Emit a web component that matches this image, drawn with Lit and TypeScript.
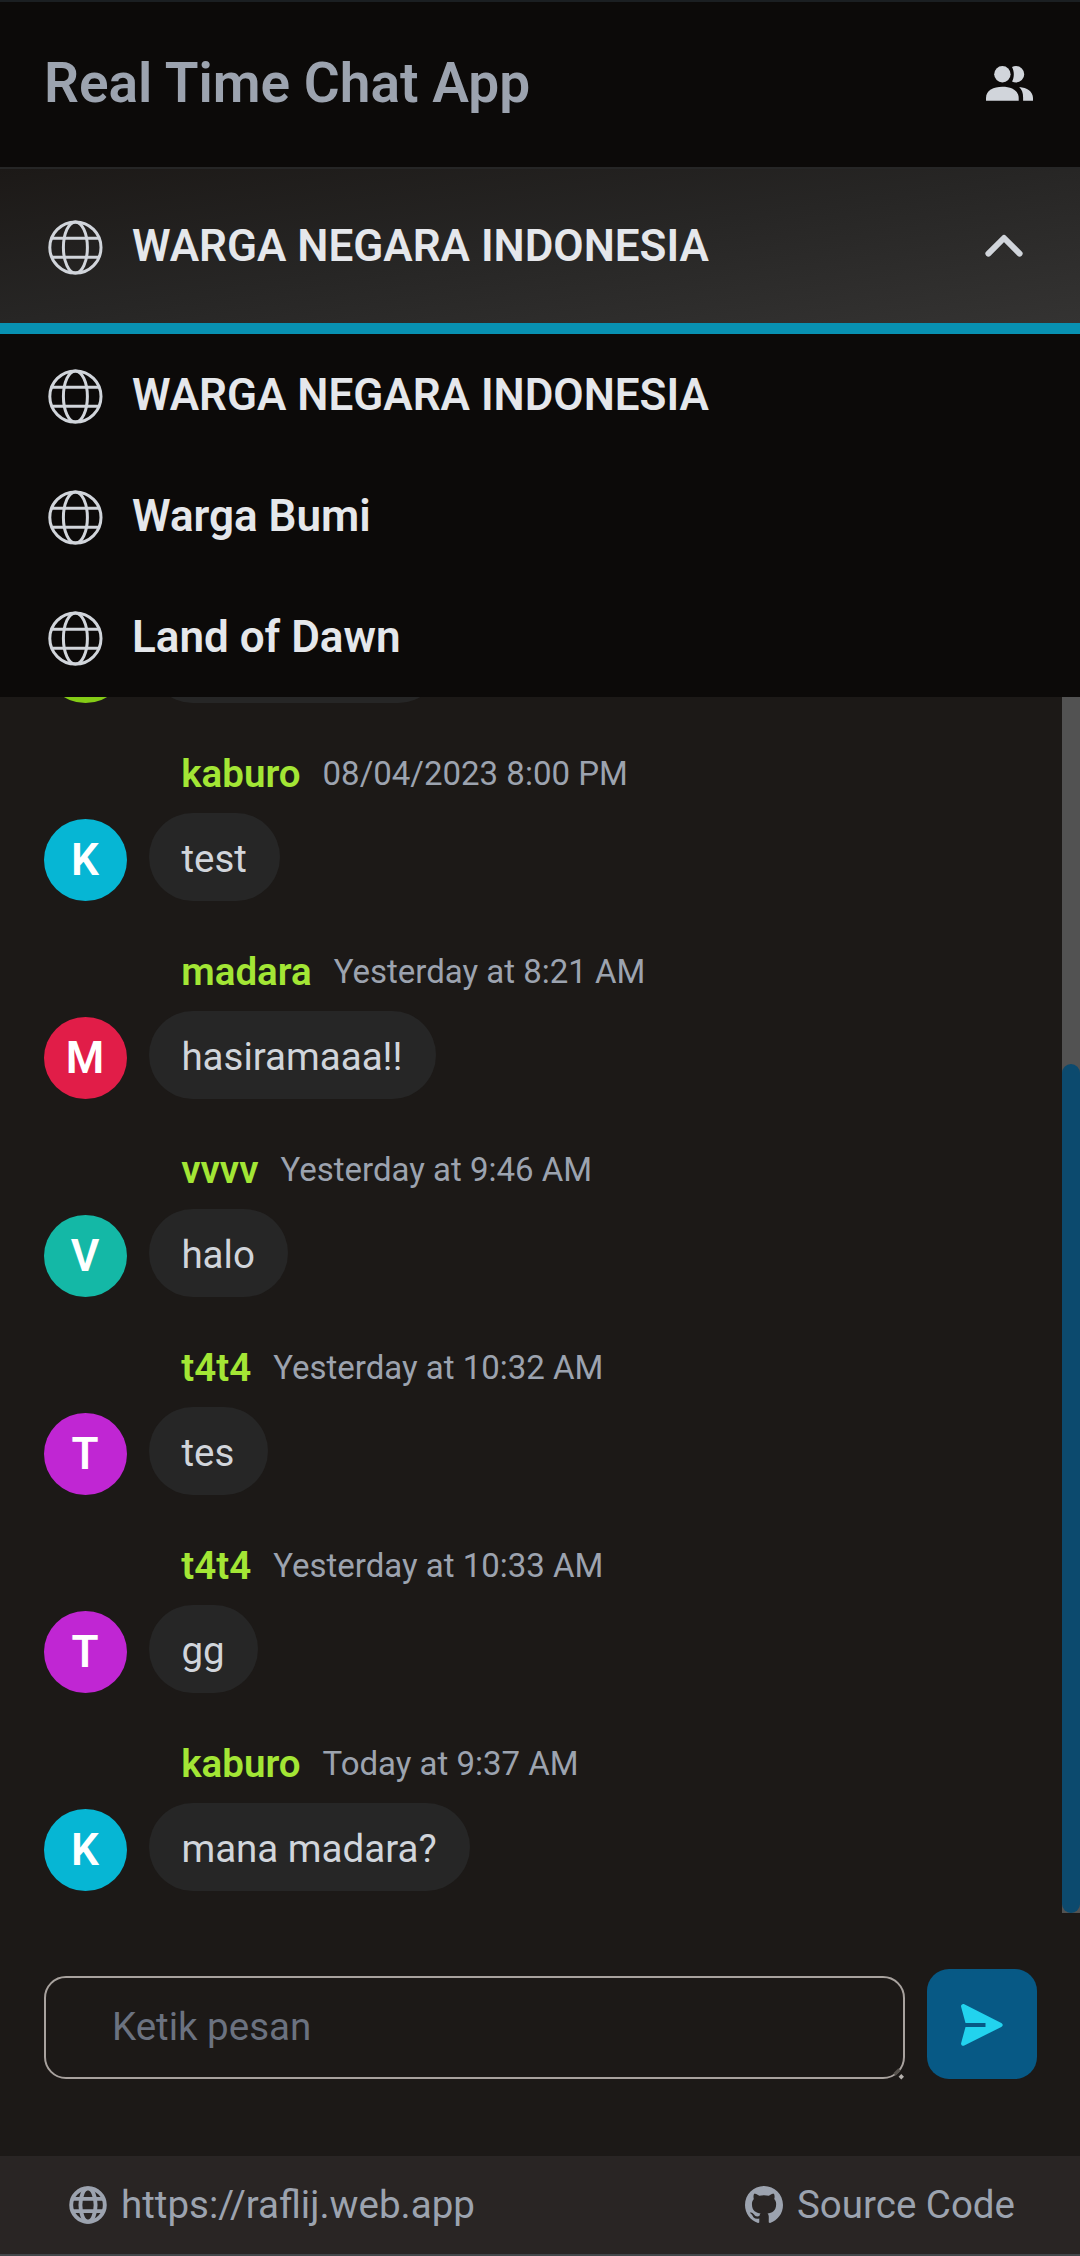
import { LitElement, html, css, svg } from "lit";
import { customElement, property } from "lit/decorators.js";
import { styleMap } from "lit/directives/style-map.js";

interface Message {
  name: string;
  time: string;
  text: string;
  initial: string;
  color: string;
  width?: number;
}

const CYAN = "#06b6d4";
const FUCHSIA = "#c026d3";

const MESSAGES: Message[] = [
  { name: "", time: "", text: "", initial: "", color: "#84cc16", width: 293 },
  { name: "kaburo", time: "08/04/2023 8:00 PM", text: "test", initial: "K", color: CYAN },
  { name: "madara", time: "Yesterday at 8:21 AM", text: "hasiramaaa!!", initial: "M", color: "#e11d48" },
  { name: "vvvv", time: "Yesterday at 9:46 AM", text: "halo", initial: "V", color: "#14b8a6" },
  { name: "t4t4", time: "Yesterday at 10:32 AM", text: "tes", initial: "T", color: FUCHSIA },
  { name: "t4t4", time: "Yesterday at 10:33 AM", text: "gg", initial: "T", color: FUCHSIA },
  { name: "kaburo", time: "Today at 9:37 AM", text: "mana madara?", initial: "K", color: CYAN },
];

const ROOMS = ["WARGA NEGARA INDONESIA", "Warga Bumi", "Land of Dawn"];

const thinGlobe = html`<svg class="globe" viewBox="0 0 62 62" fill="none" stroke="#d1d5db" stroke-width="3">
  ${svg`<circle cx="31.4" cy="30.5" r="25.6"/><ellipse cx="31.4" cy="30.5" rx="12" ry="25.6"/><path d="M7.7 21.3h47.4M7.7 40.3h47.4"/>`}
</svg>`;

@customElement("chat-message")
export class ChatMessage extends LitElement {
  @property({ attribute: false }) message!: Message;

  static styles = css`
    :host { display: flex; flex-direction: column; flex: none; height: 198px; box-sizing: border-box; padding: 43px 0 0 44px; }
    .head { display: flex; align-items: center; gap: 22px; height: 55px; margin-left: 137.3px; margin-bottom: 12px; }
    .name { font-size: 38.5px; line-height: 55px; font-weight: 600; color: #a3e635; }
    .time { font-size: 33px; line-height: 44px; color: #9ca3af; }
    .row { display: flex; align-items: flex-end; gap: 22px; height: 88px; }
    .avatar { display: flex; align-items: center; justify-content: center; box-sizing: border-box; width: 83px; height: 82px; padding-right: 1px; border-radius: 50%; color: #fff; font-size: 44px; line-height: 66px; font-weight: 600; }
    .bubble { box-sizing: border-box; height: 88px; padding: 0 33.4px 0 32.4px; border-radius: 44px; background: #262626; color: #d1d5db; font-size: 38.5px; line-height: 92px; white-space: nowrap; }
  `;

  render() {
    const m = this.message;
    return html`
      <div class="head"><span class="name">${m.name}</span><span class="time">${m.time}</span></div>
      <div class="row">
        <div class="avatar" style=${styleMap({ background: m.color })}>${m.initial}</div>
        <div class="bubble" style=${styleMap(m.width ? { width: `${m.width}px` } : {})}>${m.text}</div>
      </div>
    `;
  }
}

@customElement("app-root")
export class AppRoot extends LitElement {
  static styles = css`
    :host { display: flex; flex-direction: column; width: 1080px; height: 2256px; box-sizing: border-box; overflow: hidden; background: #1c1917; border-top: 2px solid #1b1f22; border-bottom: 2px solid #42474b; font-family: Roboto, "Liberation Sans", sans-serif; }
    svg { display: block; flex: none; }
    .header { display: flex; flex: none; align-items: center; justify-content: space-between; height: 167px; box-sizing: border-box; padding: 0 47px 2px 44px; background: #0c0a09; border-bottom: 2px solid #262626; }
    .title { margin: 0; font-size: 55px; line-height: 77px; font-weight: 600; color: #9ca3af; }
    .people { width: 47px; height: 35px; fill: #d1d5db; margin-top: 0; }
    .current { display: flex; flex: none; align-items: center; height: 165px; box-sizing: border-box; padding: 0 56px 0 44px; border-bottom: 11px solid #0891b2; background: linear-gradient(to bottom right, #1c1917, #272625 50%, #343332); }
    .rooms { display: flex; flex: none; flex-direction: column; background: #0c0a09; }
    .room { display: flex; align-items: center; height: 121px; padding-left: 44px; }
    .globe { width: 62px; height: 62px; margin-top: 4px; }
    .room-name { flex: 1; margin-left: 26px; font-size: 44px; line-height: 66px; font-weight: 600; color: #e5e7eb; }
    .chevron { width: 40px; height: 24px; }
    .chat { display: flex; flex: none; height: 1216px; }
    .messages { display: flex; flex: 1; flex-direction: column; justify-content: flex-end; overflow: hidden; box-sizing: border-box; padding-bottom: 22px; }
    .track { display: flex; flex-direction: column; justify-content: flex-end; width: 18px; background: #525252; }
    .thumb { height: 849px; border-radius: 9px; background: #0c4a6e; }
    .composer { display: flex; flex: 1; align-items: flex-end; gap: 22px; padding: 0 43px 77px 44px; }
    .field { position: relative; flex: 1; height: 103px; box-sizing: border-box; border: 2px solid #a8a29e; border-radius: 22px; padding-left: 66px; font-size: 38.5px; line-height: 97px; color: #6b7280; }
    .grip { position: absolute; right: -3px; bottom: -3px; width: 14px; height: 14px; }
    .send { display: flex; align-items: center; justify-content: center; width: 110px; height: 110px; border-radius: 22px; background: #075985; }
    .plane { width: 42px; height: 42px; fill: #22d3ee; margin-top: 1px; }
    .footer { display: flex; flex: none; align-items: center; justify-content: space-between; height: 98px; box-sizing: border-box; padding: 0 65px 2px 69px; background: #292524; color: #9ca3af; font-size: 38.5px; line-height: 55px; }
    .link { display: flex; align-items: center; gap: 14px; }
    .small { width: 38px; height: 38px; margin-top: 2px; }
  `;

  render() {
    return html`
      <header class="header">
        <h1 class="title">Real Time Chat App</h1>
        <svg class="people" viewBox="0 0 47 35">
          <circle cx="16.4" cy="8.3" r="8.2"/>
          <path d="M0 34.8V32C0 24.5 7.5 20.8 16.4 20.8S32.7 24.5 32.7 32v2.8z"/>
          <path d="M26 .9C27.2.3 28.7 0 30 0a8.2 8.2 0 0 1 0 16.5c-1.3 0-2.8-.3-4-.9C28.4 11.5 28.4 5 26 .9z"/>
          <path d="M33.2 21C41 21.6 47 25.6 47 32v2.8H37.1V31.5C37.1 27 36 23.8 33.2 21z"/>
        </svg>
      </header>
      <div class="current">
        ${thinGlobe}<span class="room-name">${ROOMS[0]}</span>
        <svg class="chevron" viewBox="0 0 40 24" fill="none" stroke="#d1d5db" stroke-width="6" stroke-linecap="round" stroke-linejoin="round"><path d="M4.4 19.6 20 4l15.6 15.6"/></svg>
      </div>
      <div class="rooms">
        ${ROOMS.map((r) => html`<div class="room">${thinGlobe}<span class="room-name">${r}</span></div>`)}
      </div>
      <main class="chat">
        <div class="messages">
          ${MESSAGES.map((m) => html`<chat-message .message=${m}></chat-message>`)}
        </div>
        <div class="track"><div class="thumb"></div></div>
      </main>
      <div class="composer">
        <div class="field">Ketik pesan
          <svg class="grip" viewBox="0 0 14 14"><path d="M2.5 8.5 7.5 3.5" stroke="#57534e" stroke-width="3.4"/><path d="m9.3 8 2.7 2.7-2.7 2.7-2.7-2.7z" fill="#b5b1ad"/></svg>
        </div>
        <div class="send">
          <svg class="plane" viewBox="0 0 42 42"><path d="M3.3.3 40.3 18.9c1.9 1 1.9 3 0 4L3.3 41.6C1.5 42.4-.3 41 .1 39.2L4.5 23H24.5V19H4.5L.1 2.7C-.3 1 1.5-.5 3.3.3z"/></svg>
        </div>
      </div>
      <footer class="footer">
        <div class="link">
          <svg class="small" viewBox="0 0 38 38" fill="none" stroke="#9ca3af" stroke-width="3.9"><circle cx="19" cy="19" r="16.8"/><ellipse cx="19" cy="19" rx="7.6" ry="16.8"/><path d="M4 12.9h30M4 25.1h30"/></svg>
          <span>https://raflij.web.app</span>
        </div>
        <div class="link">
          <svg class="small" viewBox="0 0 16 16" fill="#9ca3af"><path d="M8 0C3.58 0 0 3.58 0 8c0 3.54 2.29 6.53 5.47 7.59.4.07.55-.17.55-.38 0-.19-.01-.82-.01-1.49-2.01.37-2.53-.49-2.69-.94-.09-.23-.48-.94-.82-1.13-.28-.15-.68-.52-.01-.53.63-.01 1.08.58 1.23.82.72 1.21 1.87.87 2.33.66.07-.52.28-.87.51-1.07-1.78-.2-3.64-.89-3.64-3.95 0-.87.31-1.59.82-2.15-.08-.2-.36-1.02.08-2.12 0 0 .67-.21 2.2.82.64-.18 1.32-.27 2-.27s1.36.09 2 .27c1.53-1.04 2.2-.82 2.2-.82.44 1.1.16 1.92.08 2.12.51.56.82 1.27.82 2.15 0 3.07-1.87 3.75-3.65 3.95.29.25.54.73.54 1.48 0 1.07-.01 1.93-.01 2.2 0 .21.15.46.55.38A8.01 8.01 0 0 0 16 8c0-4.42-3.58-8-8-8z"/></svg>
          <span>Source Code</span>
        </div>
      </footer>
    `;
  }
}
